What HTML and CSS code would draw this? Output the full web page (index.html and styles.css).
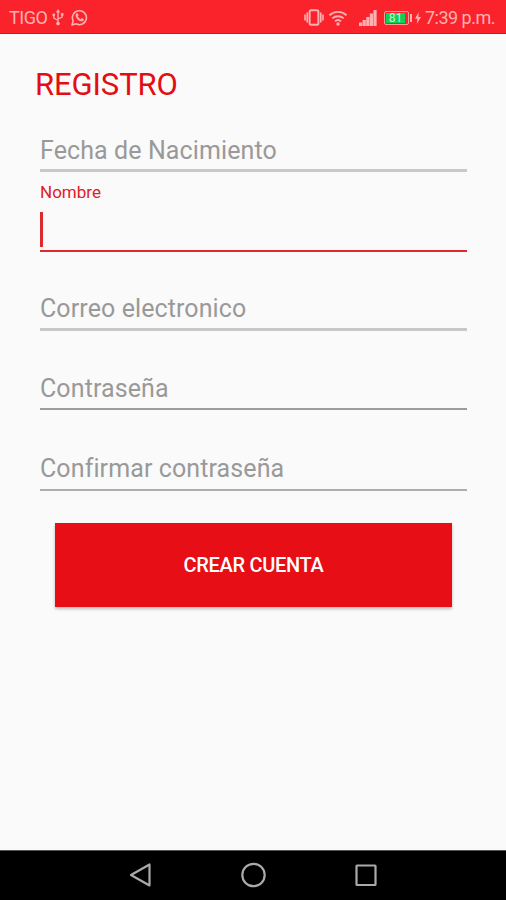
FILE: index.html
```html
<!DOCTYPE html>
<html lang="es">
<head>
  <meta charset="UTF-8">
  <title>Registro</title>
  <meta name="viewport" content="width=device-width, initial-scale=1.0">
  <link rel="stylesheet" href="styles.css">
</head>
<body>
  <header class="status-bar">
    <div class="status-left">
      <span class="carrier">TIGO</span>
      <svg class="usb" width="12" height="17" viewBox="0 0 12 17">
        <path d="M6 2v12M6 11.5L1.8 9V6M6 10l4.2-2V5.5" fill="none" stroke="currentColor" stroke-width="1.3"/>
        <path d="M6 0l2.2 3.5H3.8z" fill="currentColor"/>
        <circle cx="6" cy="14.6" r="1.8" fill="currentColor"/>
        <circle cx="1.8" cy="6" r="1.4" fill="currentColor"/>
        <path d="M8.9 4.2h2.6v2.6H8.9z" fill="currentColor"/>
      </svg>
      <svg class="whatsapp" width="17" height="17" viewBox="0 0 17 17">
        <path d="M1 16l1.2-4.1A7 7 0 1 1 5 14.8z" fill="none" stroke="currentColor" stroke-width="1.6" stroke-linejoin="round"/>
        <path d="M5.3 4.6c.5-.6 1.2-.6 1.5 0l.7 1.6c.1.4-.5 1-.7 1.2.7 1.3 1.6 2.1 2.9 2.7.3-.3.8-1.1 1.2-1l1.6.8c.6.3.2 1.5-.5 2-1.4.9-3.5.2-5.1-1.2C5.3 9.3 3.7 6.6 5.3 4.6z" fill="currentColor"/>
      </svg>
    </div>
    <div class="status-right">
      <svg class="vibrate" width="20" height="17" viewBox="0 0 20 17">
        <rect x="5.6" y="1.2" width="8.8" height="14.6" rx="1.5" fill="none" stroke="currentColor" stroke-width="2"/>
        <path d="M3.2 3.5v10M16.8 3.5v10M1 5.500v6M19 5.500v6" stroke="currentColor" stroke-width="1.6"/>
      </svg>
      <svg class="wifi" width="20" height="16" viewBox="0 0 20 16">
        <path d="M1.5 5.2a12.5 12.5 0 0 1 17 0M4.3 8.4a8.5 8.5 0 0 1 11.4 0M7 11.4a4.6 4.6 0 0 1 6 0" fill="none" stroke="currentColor" stroke-width="1.9"/>
        <circle cx="10" cy="14" r="1.7" fill="currentColor"/>
      </svg>
      <svg class="signal" width="18" height="16" viewBox="0 0 18 16">
        <path d="M0 12.5h3.200V16H0zM3.600 10h3.200v6H3.600zM7.200 7h3.200v9H7.200zM10.800 3.500H14V16h-3.200zM14.400 0h3.200v16h-3.200z" fill="currentColor"/>
      </svg>
      <div class="battery"><span class="battery-level">81</span></div>
      <svg class="bolt" width="6" height="12" viewBox="0 0 6 12">
        <path d="M3.8 0L0 6.800h2.400L1.800 12 6 5H3.400z" fill="currentColor"/>
      </svg>
      <span class="clock">7:39 p.m.</span>
    </div>
  </header>

  <main class="container">
    <h1>REGISTRO</h1>
    <form class="form">
      <div class="field"><span class="hint">Fecha de Nacimiento</span></div>
      <div class="field active">
        <span class="label">Nombre</span>
        <span class="caret"></span>
      </div>
      <div class="field email"><span class="hint">Correo electronico</span></div>
      <div class="field password"><span class="hint">Contraseña</span></div>
      <div class="field confirm"><span class="hint">Confirmar contraseña</span></div>
      <button class="submit" type="button">CREAR CUENTA</button>
    </form>
  </main>

  <footer class="nav-bar">
    <svg width="24" height="26" viewBox="0 0 24 26">
      <path d="M21.500 2.500v21L3 13z"/>
    </svg>
    <svg width="26" height="26" viewBox="0 0 26 26">
      <circle cx="13.500" cy="13" r="11.200"/>
    </svg>
    <svg width="24" height="26" viewBox="0 0 24 26">
      <rect x="2.500" y="3.500" width="19" height="19.500" rx=".5"/>
    </svg>
  </footer>
</body>
</html>
```

FILE: styles.css
```css
* { box-sizing: border-box; }
body {
  margin: 0;
  height: 900px;
  display: flex;
  flex-direction: column;
  font-family: Roboto, sans-serif;
  background: #fafafa;
}
.status-bar {
  height: 34px;
  display: flex;
  justify-content: space-between;
  align-items: center;
  padding: 2px 11px 0 9px;
  background: #fa232b;
  border-bottom: 1px solid #e01018;
  color: #ffb0b2;
}
.status-left,
.status-right {
  display: flex;
  align-items: center;
}
.carrier {
  font-size: 18px;
  letter-spacing: -0.5px;
}
.usb { margin-left: 5px; }
.whatsapp { margin-left: 7px; }
.wifi { margin-left: 4px; }
.signal { margin-left: 11px; }
.battery {
  position: relative;
  width: 25px;
  height: 14px;
  margin-left: 7px;
  padding: 1px;
  border: 1px solid #ff9a9c;
  border-radius: 2px;
}
.battery::after {
  content: "";
  position: absolute;
  right: -4px;
  top: 2px;
  width: 2px;
  height: 8px;
  background: #ffb0b2;
}
.battery-level {
  display: block;
  width: 19px;
  height: 10px;
  background: #12cf55;
  color: #c9f5d3;
  font-size: 12px;
  line-height: 10px;
  text-align: center;
}
.bolt { margin-left: 6px; }
.clock {
  margin-left: 4px;
  font-size: 18px;
  letter-spacing: -0.5px;
}
.container {
  flex: 1;
  padding: 32px 39px 0 40px;
}
h1 {
  margin: 0 0 0 -5px;
  font-size: 31px;
  font-weight: normal;
  line-height: 37px;
  letter-spacing: -0.1px;
  color: #e30d13;
}
.form {
  display: flex;
  flex-direction: column;
}
.field {
  height: 69px;
  display: flex;
  flex-direction: column;
  justify-content: flex-end;
  border-bottom: 3px solid #c8c8c8;
}
.hint {
  font-size: 25px;
  line-height: 30px;
  letter-spacing: 0.1px;
  padding-bottom: 3px;
  color: #999;
}
.field.active {
  height: 80px;
  border-bottom: 2px solid #dd2a2f;
}
.label {
  font-size: 17px;
  line-height: 20px;
  color: #e02026;
}
.caret {
  width: 3px;
  height: 35px;
  margin: 10px 0 3px;
  background: #dd2a2f;
}
.field.email { height: 79px; }
.field.password {
  height: 79px;
  border-bottom: 2px solid #9c9c9c;
}
.field.confirm {
  height: 81px;
  border-bottom: 2px solid #adadad;
}
.field.password .hint { padding-bottom: 4px; }
.field.email .hint { padding-bottom: 4px; }
.field.confirm .hint { padding-bottom: 5px; }
.submit {
  height: 84px;
  margin: 32px 15px 0;
  border: none;
  background: #e70f15;
  color: #fff;
  font-family: inherit;
  font-size: 20px;
  font-weight: 500;
  letter-spacing: -0.3px;
  box-shadow: 0 2px 3px rgba(0,0,0,0.25);
}
.nav-bar {
  height: 50px;
  display: flex;
  justify-content: center;
  align-items: center;
  gap: 88px;
  padding-bottom: 1px;
  background: #000;
  border-top: 1px solid #555;
}
.nav-bar svg {
  fill: none;
  stroke: #aaa;
  stroke-width: 2.2;
  stroke-linejoin: round;
}
```
